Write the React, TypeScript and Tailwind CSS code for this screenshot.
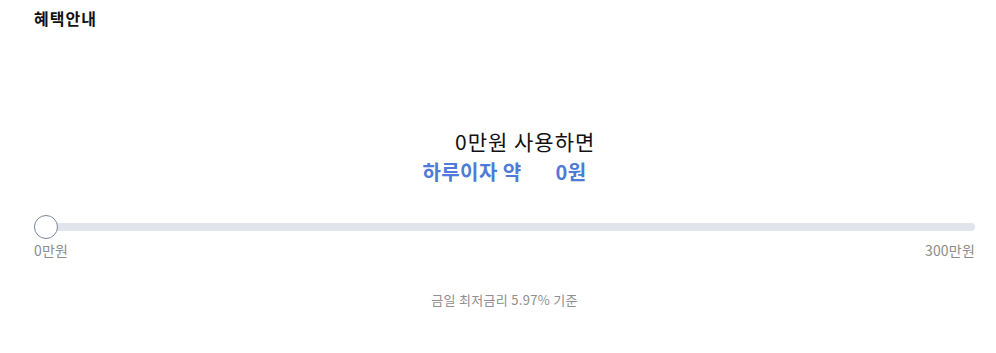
import React from 'react';

export default function App() {
  const used = 0;
  const max = 300;
  const pct = (used / max) * 100;

  return (
    <div
      className="w-[996px] h-[353px] bg-white pl-[34px] pr-[21px] pt-[8px]"
      style={{ fontFamily: '"Noto Sans CJK KR", "Noto Sans", sans-serif' }}
    >
      {/* Title */}
      <h2 className="text-[16px] font-bold leading-[20px] text-[#111] tracking-[1px]">혜택안내</h2>

      {/* Summary */}
      <div className="mt-[100px] flex flex-col items-center">
        <div className="flex items-center text-[21px] leading-[26px] text-[#111] tracking-[1px]">
          <span className="inline-block w-[54px] text-right">{used}</span>
          <span>만원 사용하면</span>
        </div>
        <div className="mt-[5px] flex items-center text-[20px] font-bold leading-[26px] text-[#4e7ad8] tracking-[0.4px]">
          <span>하루이자 약</span>
          <span className="ml-[34px]">{0}원</span>
        </div>
      </div>

      {/* Slider */}
      <div className="mt-[30px] relative h-[24px] flex items-center">
        <div className="w-full h-[8px] rounded-full bg-[#e1e4eb]" />
        <div
          className="absolute top-0 w-[24px] h-[24px] rounded-full bg-white border border-[#7b8598]"
          style={{ left: `calc(${pct}% - ${(pct / 100) * 24}px)` }}
        />
      </div>
      <div className="mt-[1px] flex justify-between text-[14px] leading-[20px] text-[#8c8c8c] tracking-[0.2px]">
        <span>0만원</span>
        <span>{max}만원</span>
      </div>

      {/* Footer */}
      <p className="mt-[31px] text-center text-[13px] leading-[18px] text-[#8f8f8f] tracking-[0.3px]">
        금일 최저금리 5.97% 기준
      </p>
    </div>
  );
}
